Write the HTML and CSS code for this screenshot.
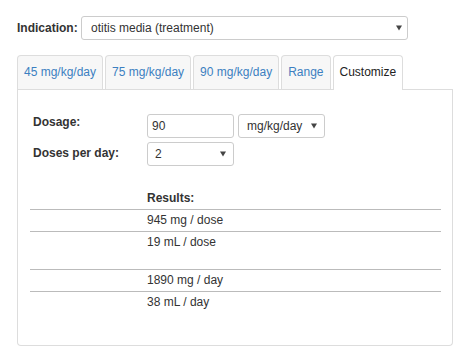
FILE: index.html
```html
<!DOCTYPE html>
<html>
<head>
<meta charset="utf-8">
<link rel="stylesheet" href="styles.css">
</head>
<body>
<div class="page">
  <div class="indication">
    <label class="ind-label">Indication:</label>
    <div class="select select-main">
      <span class="select-text">otitis media (treatment)</span>
      <svg class="caret" width="6" height="6" viewBox="0 0 6 6"><path d="M0 0.5H6L3 5.5Z"/></svg>
    </div>
  </div>

  <div class="tabs">
    <div class="tab">45 mg/kg/day</div>
    <div class="tab">75 mg/kg/day</div>
    <div class="tab">90 mg/kg/day</div>
    <div class="tab">Range</div>
    <div class="tab active">Customize</div>
  </div>

  <div class="panel">
    <div class="form">
      <div class="flabel flabel-1">Dosage:</div>
      <div class="fctrl">
        <div class="input">90</div>
        <div class="select select-unit">
          <span class="select-text">mg/kg/day</span>
          <svg class="caret" width="6" height="6" viewBox="0 0 6 6"><path d="M0 0.5H6L3 5.5Z"/></svg>
        </div>
      </div>
      <div class="flabel flabel-2">Doses per day:</div>
      <div class="fctrl">
        <div class="select select-doses">
          <span class="select-text">2</span>
          <svg class="caret" width="6" height="6" viewBox="0 0 6 6"><path d="M0 0.5H6L3 5.5Z"/></svg>
        </div>
      </div>
    </div>

    <div class="results">
      <div class="rrow rhead"><span class="rcell"></span><span class="rcell">Results:</span></div>
      <div class="rrow lined"><span class="rcell"></span><span class="rcell">945 mg / dose</span></div>
      <div class="rrow lined"><span class="rcell"></span><span class="rcell">19 mL / dose</span></div>
      <div class="rspacer"></div>
      <div class="rrow lined"><span class="rcell"></span><span class="rcell">1890 mg / day</span></div>
      <div class="rrow lined"><span class="rcell"></span><span class="rcell">38 mL / day</span></div>
    </div>
  </div>
</div>
</body>
</html>
```

FILE: styles.css
```css
* { box-sizing: border-box; }

html, body {
  margin: 0;
  padding: 0;
  background: #ffffff;
}

body {
  font-family: "Liberation Sans", Arial, sans-serif;
  font-size: 12px;
  color: #333333;
}

.page {
  width: 436px;
  margin-left: 17px;
  padding-top: 16px;
}

.indication {
  display: flex;
  align-items: center;
  height: 24px;
}

.ind-label {
  font-weight: bold;
  width: 64px;
}

.select {
  display: flex;
  align-items: center;
  justify-content: space-between;
  border: 1px solid #cccccc;
  border-radius: 3px;
  background: #ffffff;
  height: 24px;
}

.caret {
  fill: #444444;
  display: block;
}

.select-main {
  width: 327px;
  padding: 0 5px 0 9px;
}

.tabs {
  display: flex;
  align-items: flex-end;
  margin-top: 15px;
  border-bottom: 1px solid #dddddd;
}

.tab {
  height: 34px;
  line-height: 33px;
  padding: 0 6px;
  margin-right: 2px;
  border: 1px solid #dddddd;
  border-bottom: 0;
  border-radius: 4px 4px 0 0;
  background: #f7f7f7;
  color: #3c7fc1;
  white-space: nowrap;
}

.tab.active {
  background: #ffffff;
  color: #222222;
  height: 35px;
  margin-bottom: -1px;
}

.panel {
  border: 1px solid #dddddd;
  border-top: 0;
  border-radius: 0 0 4px 4px;
  padding: 24px 11px 32px 12px;
}

.form {
  display: grid;
  grid-template-columns: 117px auto;
  row-gap: 4px;
}

.flabel {
  font-weight: bold;
  padding-left: 3px;
  line-height: 14px;
}

.flabel-1 { padding-top: 1px; }
.flabel-2 { padding-top: 4px; }

.fctrl {
  display: flex;
  gap: 4px;
}

.input {
  width: 87px;
  height: 24px;
  border: 1px solid #cccccc;
  border-radius: 3px;
  padding-left: 4px;
  line-height: 22px;
}

.select-unit {
  width: 87px;
  padding: 0 7px 0 8px;
}

.select-doses {
  width: 87px;
  padding: 0 7px 0 7px;
}

.results {
  margin-top: 22px;
}

.rrow {
  display: grid;
  grid-template-columns: 117px auto;
  line-height: 21px;
}

.rhead {
  font-weight: bold;
}

.lined {
  border-top: 1px solid #bbbbbb;
}

.rspacer {
  height: 16px;
}
```
